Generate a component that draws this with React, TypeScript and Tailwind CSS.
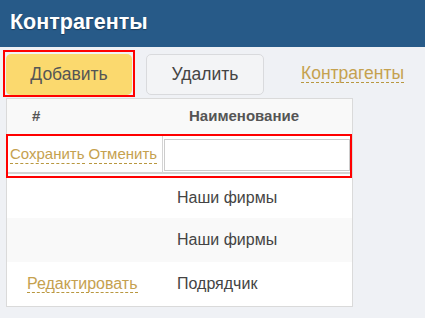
const link =
  "text-[#c5a14f] border-b border-dashed border-[#b8973f] leading-[18px] cursor-pointer";

const rows = [
  { name: "Наши фирмы", edit: false, striped: false },
  { name: "Наши фирмы", edit: false, striped: true },
  { name: "Подрядчик", edit: true, striped: false },
];

export default function App() {
  return (
    <div className="min-h-[318px] w-[425px] bg-[#eff1f5] font-['Liberation_Sans',Arial,sans-serif] text-[#444]">
      <div className="h-[47px] bg-[#275a88] pl-[10px] flex items-center">
        <h1 className="text-[21.5px] font-bold text-white [text-shadow:0_1px_1px_rgba(0,0,0,0.35)] pb-[2px]">
          Контрагенты
        </h1>
      </div>

      <div className="flex items-center pt-[3px]">
        <div className="ml-[3px] w-[132px] h-[47px] border-2 border-[#ff0000] pl-px pt-[2px]">
          <button className="w-[126px] h-[41px] rounded-[5px] bg-[#fbd96e] text-[17.5px] text-[#555]">
            Добавить
          </button>
        </div>
        <button className="ml-[11px] mt-px w-[118px] h-[41px] rounded-[5px] border border-[#d9dadd] bg-[#f3f4f6] text-[17.5px] text-[#444]">
          Удалить
        </button>
        <span className={`ml-[37px] text-[17.5px] ${link}`}>Контрагенты</span>
      </div>

      <div className="ml-[6px] mt-px w-[347px] border border-[#dadada] bg-white">
        <div className="grid grid-cols-[157px_1fr] h-[35px] bg-[#f9f9f9] items-center text-[15px] font-bold text-[#555]">
          <div className="pl-[25px]">#</div>
          <div className="pl-[25px]">Наименование</div>
        </div>

        <div className="-ml-px w-[346px] h-[44px] border-2 border-[#ff0000]">
          <div className="h-[38px] border-b-2 border-[#d4d4d4] flex">
            <div className="w-[155px] pl-[2px] flex items-center gap-[4px] text-[15px] whitespace-nowrap">
              <span className={link}>Сохранить</span>
              <span className={link}>Отменить</span>
            </div>
            <div className="border-l border-[#d4d4d4] pl-[1px] pt-[3px]">
              <input className="w-[186px] h-[32px] border border-[#cccccc] bg-white outline-none" />
            </div>
          </div>
        </div>

        {rows.map((r, i) => (
          <div
            key={i}
            className={`grid grid-cols-[157px_1fr] items-center text-[16px] ${
              i === 0 ? "h-[40px]" : "h-[44px]"
            } ${r.striped ? "bg-[#f9f9f9]" : "bg-white"}`}
          >
            <div className="pl-[20px]">
              {r.edit ? <span className={link}>Редактировать</span> : null}
            </div>
            <div className="pl-[13px]">{r.name}</div>
          </div>
        ))}
      </div>
    </div>
  );
}
